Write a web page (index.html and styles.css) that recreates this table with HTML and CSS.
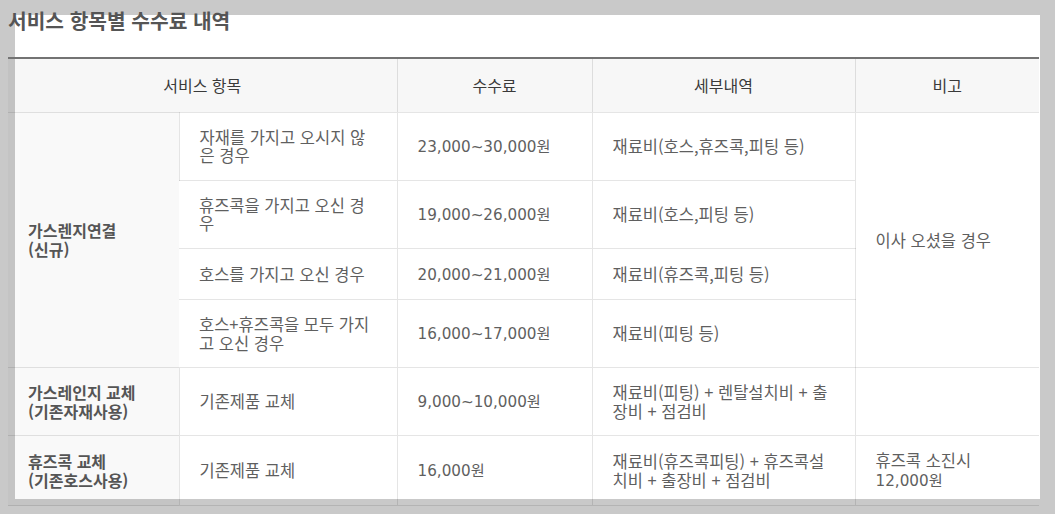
FILE: index.html
```html
<!DOCTYPE html>
<html lang="ko">
<head>
<meta charset="utf-8">
<title>서비스 항목별 수수료 내역</title>
<link rel="stylesheet" href="styles.css">
</head>
<body>
<h2 class="title">서비스 항목별 수수료 내역</h2>
<table class="fee">
  <colgroup>
    <col class="c1"><col class="c2"><col class="c3"><col class="c4"><col class="c5">
  </colgroup>
  <thead>
    <tr>
      <th colspan="2">서비스 항목</th>
      <th>수수료</th>
      <th>세부내역</th>
      <th>비고</th>
    </tr>
  </thead>
  <tbody>
    <tr>
      <th rowspan="4" class="cat">가스렌지연결<br>(신규)</th>
      <td>자재를 가지고 오시지 않은 경우</td>
      <td><span class="num">23,000~30,000원</span></td>
      <td>재료비(호스,휴즈콕,피팅 등)</td>
      <td rowspan="4">이사 오셨을 경우</td>
    </tr>
    <tr>
      <td>휴즈콕을 가지고 오신 경우</td>
      <td><span class="num">19,000~26,000원</span></td>
      <td>재료비(호스,피팅 등)</td>
    </tr>
    <tr>
      <td>호스를 가지고 오신 경우</td>
      <td><span class="num">20,000~21,000원</span></td>
      <td>재료비(휴즈콕,피팅 등)</td>
    </tr>
    <tr>
      <td>호스+휴즈콕을 모두 가지고 오신 경우</td>
      <td><span class="num">16,000~17,000원</span></td>
      <td>재료비(피팅 등)</td>
    </tr>
    <tr>
      <th class="cat">가스레인지 교체<br>(기존자재사용)</th>
      <td>기존제품 교체</td>
      <td><span class="num">9,000~10,000원</span></td>
      <td>재료비(피팅) + 렌탈설치비 + 출장비 + 점검비</td>
      <td></td>
    </tr>
    <tr>
      <th class="cat">휴즈콕 교체<br>(기존호스사용)</th>
      <td>기존제품 교체</td>
      <td><span class="num">16,000원</span></td>
      <td>재료비(휴즈콕피팅) + 휴즈콕설치비 + 출장비 + 점검비</td>
      <td>휴즈콕 소진시 <span class="num">12,000원</span></td>
    </tr>
  </tbody>
</table>
</body>
</html>
```

FILE: styles.css
```css
html {
  background: linear-gradient(#ffffff, #ffffff) 15px 15px / 1025px 484px no-repeat, #c9c9c9;
}

body {
  margin: 8px;
  font-family: "Noto Sans CJK KR", "Noto Sans", sans-serif;
  font-size: 16.5px;
  color: #5f5f5f;
}

.title {
  margin: 0 0 25px;
  font-size: 20.3px;
  line-height: 24px;
  font-weight: 700;
  color: #555555;
}

.fee {
  width: 1031px;
  table-layout: fixed;
  border-collapse: collapse;
  border-top: 2px solid #737373;
  line-height: 18.5px;
}

.c1 { width: 171px; }
.c2 { width: 218px; }
.c3 { width: 195px; }
.c4 { width: 263px; }
.c5 { width: 184px; }

.fee th,
.fee td {
  padding: 15px 20px;
  border-bottom: 1px solid rgba(0, 0, 0, 0.1);
  border-left: 1px solid rgba(0, 0, 0, 0.1);
  vertical-align: middle;
  text-align: left;
  font-weight: 400;
}

.fee tr > :first-child {
  border-left: 0;
}

.fee thead th {
  padding: 17px 20px;
  text-align: center;
  font-size: 16px;
  background: rgba(0, 0, 0, 0.03);
  color: #3a3a3a;
}

.fee .cat {
  font-size: 16px;
  background: rgba(0, 0, 0, 0.025);
  font-weight: 700;
  color: #555555;
  border-left: 0;
}

.num {
  font-family: "DejaVu Sans", "Noto Sans CJK KR", sans-serif;
  font-size: 15.2px;
}
```
